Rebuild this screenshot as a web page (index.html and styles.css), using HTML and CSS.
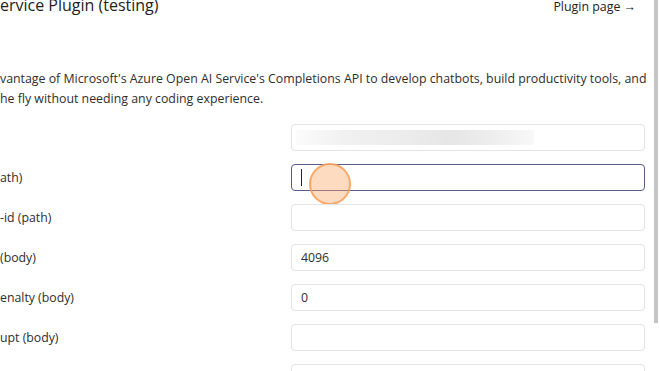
FILE: index.html
```html
<!DOCTYPE html>
<html lang="en">
<head>
	<meta charset="UTF-8">
	<meta name="viewport" content="width=device-width, initial-scale=1.0">
	<title>Azure Open AI Service Plugin (testing)</title>
	<link rel="stylesheet" href="styles.css">
</head>
<body>
	<main class="page">
		<header class="top">
			<h1>ervice Plugin (testing)</h1>
			<a class="plugin-link" href="#">Plugin page →</a>
		</header>
		<p class="desc">vantage of Microsoft's Azure Open AI Service's Completions API to develop chatbots, build productivity tools, and<br>he fly without needing any coding experience.</p>
		<form class="params">
			<div class="row">
				<label></label>
				<div class="field"><input class="blurred" type="text"></div>
			</div>
			<div class="row">
				<label>ath)</label>
				<div class="field">
					<input class="focused" type="text">
					<span class="caret"></span>
					<span class="click"></span>
				</div>
			</div>
			<div class="row">
				<label>-id (path)</label>
				<div class="field"><input type="text"></div>
			</div>
			<div class="row">
				<label>(body)</label>
				<div class="field"><input type="text" value="4096"></div>
			</div>
			<div class="row">
				<label>enalty (body)</label>
				<div class="field"><input type="text" value="0"></div>
			</div>
			<div class="row">
				<label>upt (body)</label>
				<div class="field"><input type="text"></div>
			</div>
			<div class="row">
				<label></label>
				<div class="field"><input type="text"></div>
			</div>
		</form>
	</main>
	<div class="rail"><div class="thumb"></div></div>
</body>
</html>
```

FILE: styles.css
```css
html,body{ margin: 0; padding: 0; height: 100%; }
body{
	display: flex;
	overflow: hidden;
	background: #fff;
	font-family: "Open Sans", "Noto Sans", sans-serif;
	color: #2e2e2e;
}
.page{ width: 650px; padding-right: 5px; box-sizing: border-box; }
.top{
	display: flex; justify-content: space-between; align-items: baseline;
	margin-top: -7px;
}
.top h1{
	margin: 0;
	font-size: 16px; font-weight: 400; line-height: 24px;
	color: #222;
}
.plugin-link{
	margin-right: 9px;
	font-size: 12.4px; color: #222; text-decoration: none;
}
.desc{
	margin: 52px 0 0;
	font-size: 12.35px; line-height: 19.5px;
	white-space: nowrap;
}
.params{ margin-top: 16px; display: flex; flex-direction: column; gap: 13px; }
.row{
	display: grid; grid-template-columns: 291px 1fr;
	align-items: center;
	height: 27px;
}
.row label{ font-size: 12.3px; }
.field{ position: relative; height: 27px; }
.field input{
	width: 100%; height: 27px; box-sizing: border-box;
	border: 1px solid #e4e4e4; border-radius: 4px;
	padding: 0 9px;
	font-family: inherit; font-size: 12.3px; color: #2e2e2e;
	background: #fff;
	outline: none;
}
.field input.focused{ border-color: #5c5c8c; }
.field input.blurred{
	background-image: linear-gradient(90deg, #fbfbfb, #f1f1f1 20%, #ececec 45%, #e6e6e6 65%, #efefef 85%, #f8f8f8);
	background-size: 238px 15px;
	background-position: 4px center;
	background-repeat: no-repeat;
}
.caret{
	position: absolute; left: 10px; top: 5px;
	width: 1px; height: 17px; background: #222;
}
.click{
	position: absolute; left: 18px; top: 0;
	width: 38px; height: 38px; border-radius: 50%;
	background: rgba(251, 165, 100, 0.4);
	border: 2px solid rgba(245, 160, 90, 0.85);
	margin-top: -1px;
}
.rail{ width: 10px; flex: none; }
.thumb{ width: 4px; height: 323px; margin-left: 4px; background: #c4c4c4; }
```
